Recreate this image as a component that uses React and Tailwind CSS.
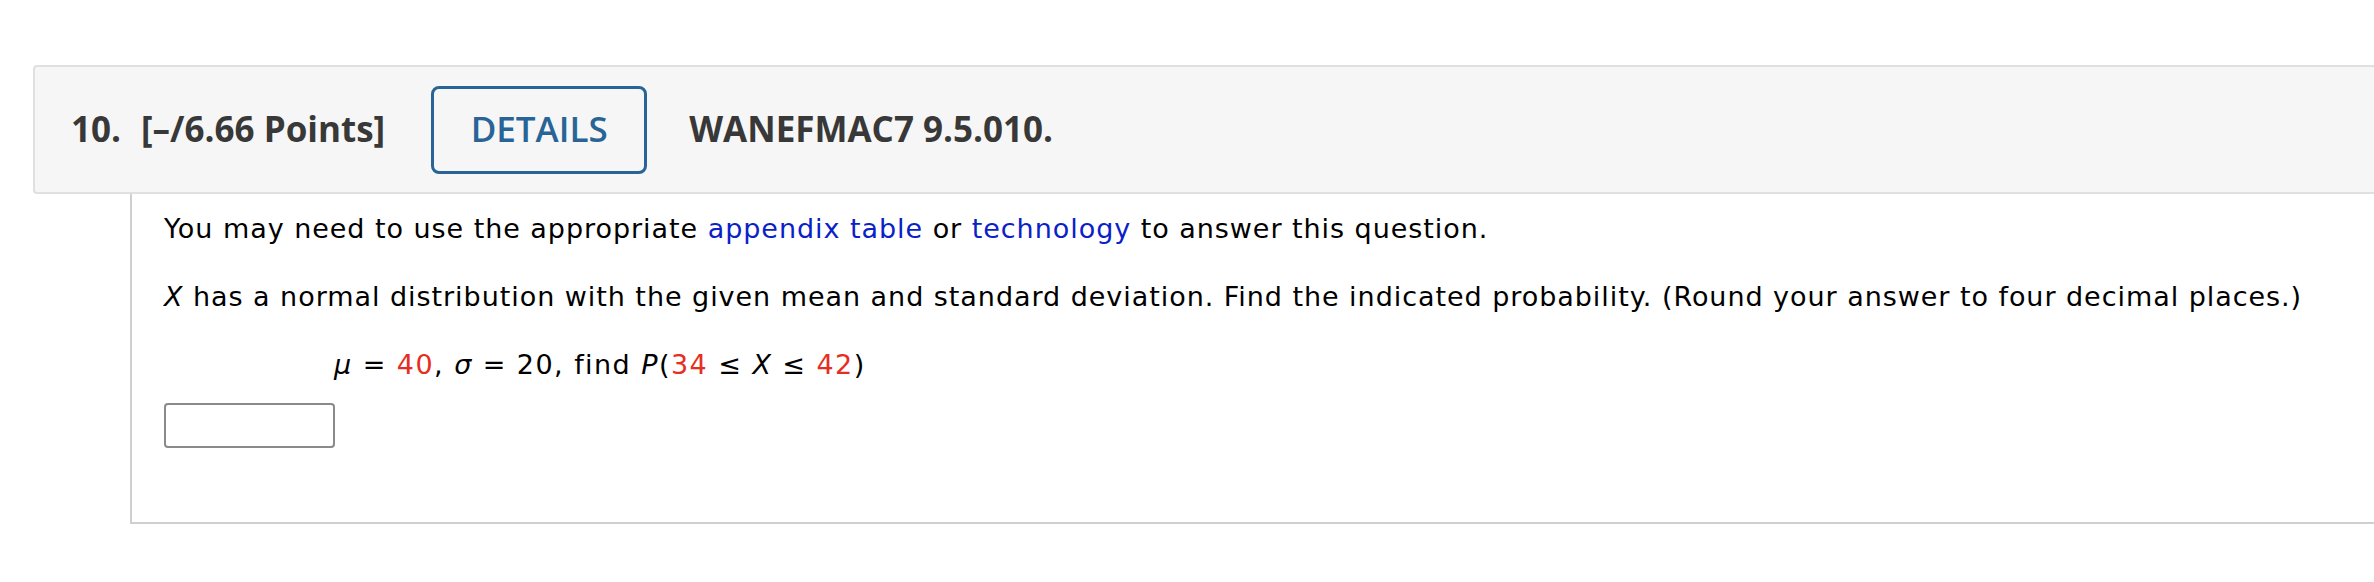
import React from "react";

export default function App() {
  const body = { fontFamily: '"DejaVu Sans", Verdana, sans-serif' };
  const head = { fontFamily: '"Open Sans", "Liberation Sans", sans-serif' };
  return (
    <div className="w-[2374px] h-[582px] overflow-hidden bg-white">
      <div className="w-[2420px] pt-[65px] pl-[33px]">
        <div
          className="flex items-center h-[129px] bg-[#f6f6f6] border-2 border-[#e0e0e0] rounded-[4px] pl-[36px]"
          style={head}
        >
          <span className="text-[35px] font-bold text-[#383838]">10.</span>
          <span className="ml-[20px] text-[35px] font-bold text-[#383838]">[–/6.66 Points]</span>
          <div className="ml-[46px] w-[216px] h-[88px] flex items-center justify-center border-[3px] border-[#296497] rounded-[8px]">
            <span className="text-[35px] font-semibold text-[#296497]">DETAILS</span>
          </div>
          <span className="ml-[42px] text-[35px] font-bold text-[#383838]">WANEFMAC7 9.5.010.</span>
        </div>
        <div
          className="ml-[97px] h-[330px] border-l-2 border-b-2 border-[#cfcfcf] pl-[32px] pt-[15px] text-black text-[27px] tracking-[0.95px]"
          style={body}
        >
          <p className="leading-[40px]">
            You may need to use the appropriate{" "}
            <span className="text-[#0a21c8]">appendix table</span> or{" "}
            <span className="text-[#0a21c8]">technology</span> to answer this question.
          </p>
          <p className="mt-[28px] leading-[40px]">
            <i>X</i> has a normal distribution with the given mean and standard deviation. Find the indicated probability. (Round your answer to four decimal places.)
          </p>
          <p className="mt-[28px] leading-[40px] pl-[170px] tracking-[1.45px]">
            <i>μ</i> = <span className="text-[#e62e1f]">40</span>, <i>σ</i> = 20, find <i>P</i>(
            <span className="text-[#e62e1f]">34</span> ≤ <i>X</i> ≤ <span className="text-[#e62e1f]">42</span>)
          </p>
          <div className="mt-[18px] w-[171px] h-[45px] border-2 border-[#8a8a8a] rounded-[4px] bg-white" />
        </div>
      </div>
    </div>
  );
}
